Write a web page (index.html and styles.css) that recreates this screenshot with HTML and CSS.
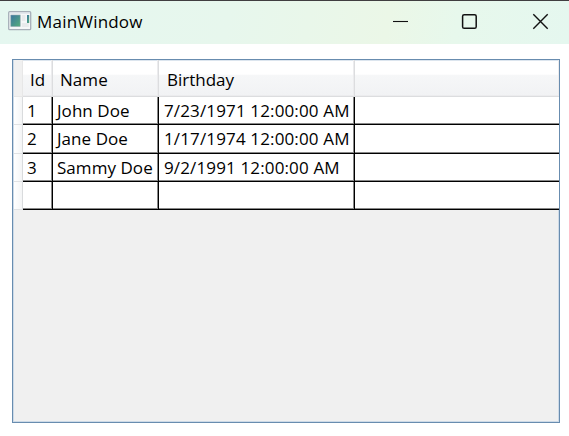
FILE: index.html
```html
<!DOCTYPE html>
<html lang="en">
<head>
<meta charset="utf-8">
<title>MainWindow</title>
<link rel="stylesheet" href="styles.css">
</head>
<body>
<header class="titlebar">
  <svg class="app-icon" width="24" height="20" viewBox="0 0 24 20">
    <defs><linearGradient id="g" x2="1" y2="1"><stop stop-color="#3b759f"/><stop offset="1" stop-color="#55ad7c"/></linearGradient></defs>
    <rect x=".7" y=".7" width="22" height="18" rx="1" fill="#f5f7f8" stroke="#a7afb8" stroke-width="1.3"/>
    <path d="M1.5 2h20.5" stroke="#d3d9e2"/>
    <rect x="2.8" y="4" width="9.4" height="11.5" fill="url(#g)" stroke="#93a9b0" stroke-width=".6"/>
    <path d="M13.8 4h3.6v6h-3.6zM13.8 12h7v4h-7z" fill="#e8eaec"/>
    <rect x="19" y="4" width="2.2" height="8" fill="url(#g)"/>
  </svg>
  <span class="title">MainWindow</span>
  <svg class="controls" width="158" height="18" viewBox="0 0 158 18" fill="none" stroke="#111">
    <path d="M1 9.5h15" stroke-width="1.1"/>
    <rect x="70.6" y="2.7" width="13.6" height="13.6" rx="1.6" stroke-width="1.5"/>
    <path d="M141.3 2.3l14.4 14.4M155.7 2.3l-14.4 14.4" stroke-width="1.4"/>
  </svg>
</header>
<main class="datagrid">
  <div class="row head"><i class="rowhead"></i><div class="c id">Id</div><div class="c name">Name</div><div class="c date">Birthday</div><div class="c rest"></div></div>
  <div class="row"><i class="rowhead"></i><div class="c id">1</div><div class="c name">John Doe</div><div class="c date">7/23/1971 12:00:00 AM</div><div class="c rest"></div></div>
  <div class="row"><i class="rowhead"></i><div class="c id">2</div><div class="c name">Jane Doe</div><div class="c date">1/17/1974 12:00:00 AM</div><div class="c rest"></div></div>
  <div class="row"><i class="rowhead"></i><div class="c id">3</div><div class="c name">Sammy Doe</div><div class="c date">9/2/1991 12:00:00 AM</div><div class="c rest"></div></div>
  <div class="row"><i class="rowhead"></i><div class="c id"></div><div class="c name"></div><div class="c date"></div><div class="c rest"></div></div>
</main>
</body>
</html>
```
FILE: styles.css
```css
* { box-sizing: border-box; }
body {
  margin: 0;
  height: 436px;
  overflow: hidden;
  background: #fff;
  color: #000;
  font: 17px/28px "Open Sans", "Noto Sans", sans-serif;
}
.titlebar {
  display: flex;
  align-items: flex-start;
  height: 44px;
  padding: 0 19px 0 8px;
  border-top: 1px solid #403e40;
  background: linear-gradient(100deg, #e5f7f0 0%, #e7f7ed 40%, #ebf7e7 68%, #e7f8ec 80%, #e5f7ef 100%);
}
.app-icon { margin-top: 10px; }
.title { margin: 7px auto 0 5px; letter-spacing: .2px; }
.controls { margin-top: 11px; }
.datagrid {
  width: 548px;
  height: 364px;
  margin: 15px 0 0 12px;
  border: 1px solid #688caf;
  background: #f0f0f0;
  box-shadow: inset 0 0 0 1px #cddae7;
}
.row { display: flex; height: 28px; padding-left: 1px; }
.row:nth-child(3) { height: 29px; }
.rowhead {
  width: 9px;
  background: linear-gradient(90deg, #fff, #f4f5f6);
  border-right: 1px solid #d9dbdd;
  border-bottom: 1px solid #e0e2e4;
}
.c {
  padding-left: 5px;
  background: #fff;
  border-right: 1px solid #000;
  border-bottom: 1px solid #000;
  box-shadow: inset -1px -1px #888;
  white-space: nowrap;
}
.id { width: 30px; padding-left: 4px; }
.name { width: 106px; padding-left: 4px; letter-spacing: .05px; }
.date { width: 196px; letter-spacing: .14px; }
.rest { flex: 1; border-right: 0; box-shadow: inset 0 -1px #888; }
.head { height: 37px; }
.head .rowhead { background: #f0f0f0; border-color: #e7e7e7; }
.head .c {
  padding: 6px 0 0 8px;
  background: linear-gradient(#fff 0, #fff 40%, #f6f7f8 41%, #f1f2f4 100%);
  border-color: #dcdddf;
  box-shadow: inset -1px -1px #ececee, inset 0 1px #dce5ee;
}
.head .id, .head .name { padding-left: 7px; }
.head .date { letter-spacing: 0; }
```
